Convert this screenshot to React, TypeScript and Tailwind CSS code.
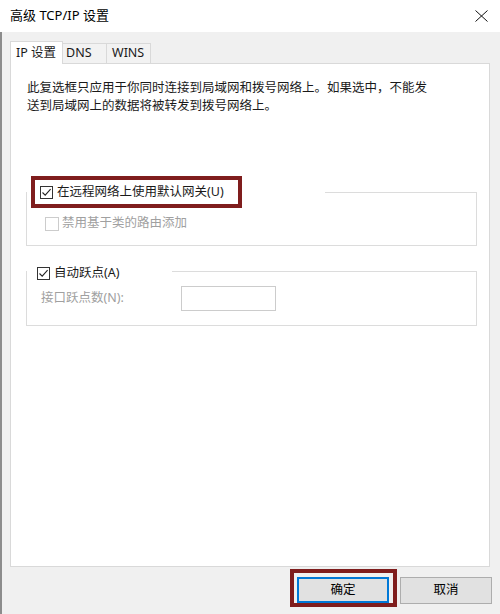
import React from "react";

const Checkbox = ({ checked, disabled }: { checked?: boolean; disabled?: boolean }) => (
  <span
    className={
      disabled
        ? "flex h-[14px] w-[14px] shrink-0 border border-[#cccccc] bg-white"
        : "flex h-[13px] w-[13px] shrink-0 items-center justify-center border border-[#333333] bg-white"
    }
  >
    {checked && (
      <svg width="11" height="11" viewBox="0 0 11 11">
        <path d="M1.5 5.5 L4.2 8.2 L9.6 2.2" fill="none" stroke="#222" strokeWidth="1.1" />
      </svg>
    )}
  </span>
);

export default function App() {
  return (
    <div className="flex h-[614px] w-[500px] flex-col overflow-hidden bg-white font-['Noto_Sans','Noto_Sans_CJK_SC',sans-serif] text-[12.5px] text-[#1a1a1a]">
      {/* title bar */}
      <div className="flex h-[32px] shrink-0 items-center justify-between bg-white pl-[10px] pr-[12px]">
        <span className="text-[13px] text-black">高级 TCP/IP 设置</span>
        <svg width="13" height="12" viewBox="0 0 13 12">
          <path d="M0.5 0.5 L12.5 11.5 M12.5 0.5 L0.5 11.5" stroke="#111" strokeWidth="1" />
        </svg>
      </div>

      <div className="flex flex-1 flex-col border-l-2 border-[#8c8c8c] bg-[#f0f0f0] pl-[8px] pr-[10px] pt-[9px]">
        {/* tabs */}
        <div className="relative z-10 -mb-px flex h-[23px] items-end">
          <div className="flex h-[23px] w-[53px] items-center border border-b-0 border-[#d9d9d9] bg-white pl-[5px]">
            IP 设置
          </div>
          <div className="mb-px flex h-[20px] w-[44px] items-center border-r border-t border-[#d9d9d9] bg-[#f2f2f2] pl-[3px]">
            DNS
          </div>
          <div className="mb-px flex h-[20px] w-[44px] items-center border-r border-t border-[#d9d9d9] bg-[#f2f2f2] pl-[5px]">
            WINS
          </div>
        </div>

        {/* panel */}
        <div className="flex flex-1 flex-col border border-[#d9d9d9] bg-white pl-[15px] pt-[15px]">
          <p className="ml-px w-[406px] leading-[18px]">
            此复选框只应用于你同时连接到局域网和拨号网络上。如果选中，不能发送到局域网上的数据将被转发到拨号网络上。
          </p>

          <fieldset className="mt-[61px] w-[451px] border border-[#dcdcdc]">
            <legend className="w-[298px]">
              <div className="ml-[4px] flex h-[32px] w-[211px] items-center gap-[4px] border-4 border-[#7f1d1d] bg-white pl-[5px]">
                <Checkbox checked />
                <span>在远程网络上使用默认网关(U)</span>
              </div>
            </legend>
            <div className="mt-[8px] flex h-[15px] items-center gap-[3px] pb-0 pl-[18px]">
              <Checkbox disabled />
              <span className="text-[#a0a0a0]">禁用基于类的路由添加</span>
            </div>
            <div className="h-[14px]" />
          </fieldset>

          <fieldset className="mt-[16px] w-[451px] border border-[#dcdcdc]">
            <legend className="w-[145px]">
              <div className="flex h-[18px] items-center gap-[4px] pl-[10px] pt-[4px]">
                <Checkbox checked />
                <span>自动跃点(A)</span>
              </div>
            </legend>
            <div className="mt-[6px] flex h-[25px] items-center pl-[14px]">
              <span className="w-[140px] text-[#a0a0a0]">接口跃点数(N):</span>
              <div className="h-[25px] w-[95px] border border-[#cccccc] bg-white" />
            </div>
            <div className="h-[14px]" />
          </fieldset>
        </div>

        {/* buttons */}
        <div className="flex h-[47px] shrink-0 items-start justify-end gap-[3px] pr-[-2px] pt-[2px]">
          <div className="border-4 border-[#7f1d1d] pl-[3px] pr-[4px] pt-[4px]">
            <div className="flex h-[26px] w-[92px] items-center justify-center border-2 border-[#0078d7] bg-[#e1e1e1] text-black">
              确定
            </div>
          </div>
          <div className="mr-[-2px] mt-[8px] flex h-[27px] w-[92px] items-center justify-center border border-[#adadad] bg-[#e1e1e1] text-black">
            取消
          </div>
        </div>
      </div>
    </div>
  );
}
